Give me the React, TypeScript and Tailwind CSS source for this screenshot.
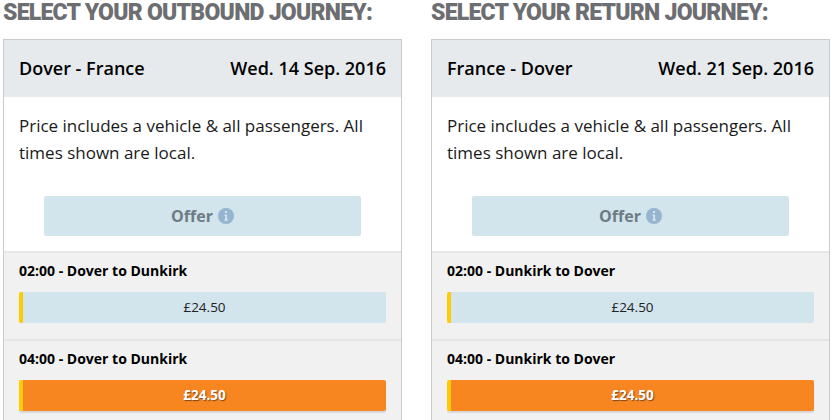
import React from 'react';

interface Sailing {
  title: string;
  active?: boolean;
}

interface JourneyProps {
  heading: string;
  route: string;
  date: string;
  sailings: Sailing[];
}

const InfoIcon = () => (
  <svg width="16" height="16" viewBox="0 0 16 16" className="shrink-0">
    <circle cx="8" cy="8" r="8" fill="#94b4cf" />
    <rect x="6.9" y="3" width="2.2" height="2" fill="#d2e4ec" />
    <path d="M6.4 6.5h2.7v5h1v1.2H6.2v-1.2h1v-3.8h-.8z" fill="#d2e4ec" />
  </svg>
);

const Journey: React.FC<JourneyProps> = ({ heading, route, date, sailings }) => (
  <div className="w-[399px] shrink-0">
    <h2 className="h-[39px] pt-[1px] font-['Roboto',sans-serif] text-[23px] leading-[23px] font-black tracking-[-0.75px] text-[#6d6e71] whitespace-nowrap">
      {heading}
    </h2>
    <div className="border border-[#c8cacc] bg-white">
      <div className="flex h-[57px] items-center justify-between bg-[#e6eaed] px-[15px] text-[18px] font-semibold text-black">
        <span>{route}</span>
        <span>{date}</span>
      </div>
      <p className="px-[15px] pt-[15px] text-[17px] leading-[27px] text-[#1a1a1a]">
        Price includes a vehicle &amp; all passengers. All times shown are local.
      </p>
      <div className="px-[40px] pt-[30px] pb-[15px]">
        <div className="flex h-[40px] items-center justify-center gap-[5px] rounded-[2px] bg-[#d2e4ec] text-[16px] font-bold text-[#6d7b85]">
          <span>Offer</span>
          <InfoIcon />
        </div>
      </div>
      {sailings.map(s => (
        <div key={s.title} className="h-[88px] border-t-2 border-[#e6e6e6] bg-[#f1f1f1] px-[15px] pt-[9px]">
          <div className="text-[14px] leading-[18px] font-bold text-black">{s.title}</div>
          <div
            className={`mt-[12px] h-[31px] rounded-[2px] border-l-4 border-[#ffcb05] text-center text-[13.5px] leading-[31px] ${
              s.active
                ? 'bg-[#f78620] font-bold text-white [text-shadow:1px_1px_1px_#7a4a20] shadow-[0_2px_1px_#d8d8d8]'
                : 'bg-[#d2e4ec] text-[#222]'
            }`}
          >
            £24.50
          </div>
        </div>
      ))}
    </div>
  </div>
);

export default function App() {
  return (
    <div className="flex h-[420px] w-[833px] gap-[29px] overflow-hidden bg-white pl-[3px] font-['Open_Sans',sans-serif]">
      <Journey
        heading="SELECT YOUR OUTBOUND JOURNEY:"
        route="Dover - France"
        date="Wed. 14 Sep. 2016"
        sailings={[
          { title: '02:00 - Dover to Dunkirk' },
          { title: '04:00 - Dover to Dunkirk', active: true },
        ]}
      />
      <Journey
        heading="SELECT YOUR RETURN JOURNEY:"
        route="France - Dover"
        date="Wed. 21 Sep. 2016"
        sailings={[
          { title: '02:00 - Dunkirk to Dover' },
          { title: '04:00 - Dunkirk to Dover', active: true },
        ]}
      />
    </div>
  );
}
